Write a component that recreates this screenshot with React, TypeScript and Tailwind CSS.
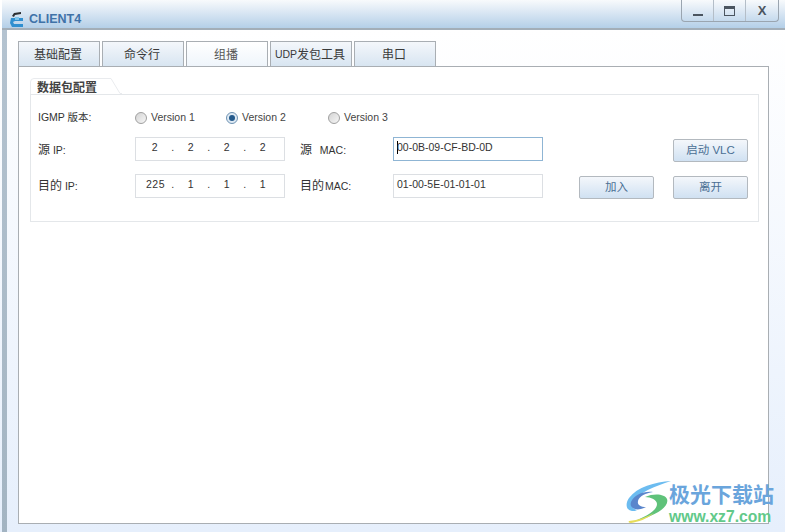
import { useState } from "react";

const font = "font-['Liberation_Sans','Noto_Sans_CJK_SC',sans-serif]";
const tabs = ["基础配置", "命令行", "组播", "UDP发包工具", "串口"];

function Radio({ label, checked, className }: { label: string; checked?: boolean; className: string }) {
  return (
    <div className={`flex items-center gap-[4px] ${className}`}>
      <span className={`w-[12px] h-[12px] rounded-full border flex items-center justify-center ${checked ? "border-[#6f93b3] bg-[#dfeaf4]" : "border-[#a0a0a0] bg-gradient-to-br from-[#d4d4d4] to-[#f6f6f6]"}`}>
        {checked && <span className="w-[6px] h-[6px] rounded-full bg-[#245a8c]" />}
      </span>
      <span className="text-[10.5px] text-[#444]">{label}</span>
    </div>
  );
}

function IpField({ parts }: { parts: string[] }) {
  return (
    <div className="w-[150px] h-[24px] border border-[#dcdfe3] bg-white pl-[10px] grid grid-cols-[repeat(7,18px)] items-center text-[10.5px] text-[#333] tracking-[0.5px] pb-[3px]">
      {parts.map((p, i) => (
        <span key={i} className="contents">
          {i > 0 && <span className="text-center">.</span>}
          <span className="text-center">{p}</span>
        </span>
      ))}
    </div>
  );
}

function Btn({ children, className }: { children: string; className: string }) {
  return (
    <button className={`w-[75px] h-[23px] rounded-[2px] border border-[#b3b9bf] bg-gradient-to-b from-[#f4f7fb] to-[#d0e1f2] text-[11.5px] text-[#4a6f94] ${className}`}>
      {children}
    </button>
  );
}

function Swirl() {
  return (
    <svg width="46" height="42" viewBox="0 0 46 42">
      <path d="M46 0C30 1 12 6 4 17c-4 6-3 12 3 13 2 0 4 0 5-1-4-1-6-4-4-8C13 12 30 5 46 0z" fill="#6cbcf0" />
      <path d="M6 21c3-7 12-11 22-10-7 1-14 4-15 9-1 4 3 6 8 6-5 3-11 3-13 1-2-1-3-3-2-6z" fill="#5a86cc" />
      <path d="M20 16c9-4 20-3 22 2 3 9-15 18-32 22 11-5 22-10 22-17 0-4-6-7-12-7z" fill="#5fc27a" />
      <path d="M4 40c9-1 18-4 25-8-7 6-16 9-23 10-2 0-3-1-2-2z" fill="#e6dc58" />
    </svg>
  );
}

export default function App() {
  const [active] = useState(2);
  return (
    <div className={`relative w-[785px] h-[532px] overflow-hidden bg-white flex flex-col ${font}`}>
      <div className="h-[30px] shrink-0 ml-[2px] border-b-2 border-[#a3aeb8] bg-gradient-to-b from-[#f8fafc] to-[#b4cfe8] flex justify-between">
        <div className="flex items-center pl-[7px] pt-[10px] gap-[3px]">
          <svg width="17" height="17" viewBox="0 0 17 17">
            <path d="M3 5l2-3 7-1 0 2-6 1-1 2z" fill="#2b2f33" />
            <path d="M2 7h12v3H6l-2 1 1 2h9v3H3l-2-4z" fill="#2f8fd0" />
            <path d="M6 6h4v3H6z" fill="#7cc4ec" />
          </svg>
          <span className="text-[12.5px] font-bold text-[#3f72a8]">CLIENT4</span>
        </div>
        <div className="mr-[6px] w-[98px] h-[22px] border border-t-0 border-[#9aa5b0] rounded-b-[4px] grid grid-cols-3 divide-x divide-[#b4bec8] text-[#4b5560]">
          <div className="flex items-end justify-center pb-[5px]"><span className="w-[10px] h-[2px] bg-[#4b5560]" /></div>
          <div className="flex items-center justify-center"><span className="w-[11px] h-[10px] border border-[#4b5560] border-t-[3px]" /></div>
          <div className="flex items-center justify-center text-[13px] font-bold">X</div>
        </div>
      </div>

      <div className="flex-1 flex min-h-0 bg-gradient-to-b from-white to-[#e6effc]">
        <div className="ml-[2px] w-[5px] bg-gradient-to-b from-[#b4c3d0] to-[#a3b4c2]" />
        <div className="flex-1 flex flex-col pl-[11px] pr-[3px] pt-[11px] pb-[8px]">
          <div className="flex gap-[2px] h-[25px] shrink-0 relative z-10">
            {tabs.map((t, i) => (
              <div
                key={t}
                className={`w-[82px] h-[26px] border border-[#a9aeb3] pr-[2px] pt-[1px] flex items-center justify-center text-[12px] text-[#3a3a3a] ${
                  i === active ? "bg-gradient-to-b from-white to-[#eff5fb] text-[#555]" : "bg-gradient-to-b from-[#f4f7fb] to-[#d8e5f1]"
                }`}
              >
                {t.startsWith("UDP") ? (
                  <>
                    <span className="text-[10.5px]">UDP</span>
                    {t.slice(3)}
                  </>
                ) : (
                  t
                )}
              </div>
            ))}
          </div>
          <div className="flex-1 w-[751px] border border-[#a9aeb3] bg-white pl-[11px] pr-[9px] pt-[11px]">
            <div className="relative h-[16px] w-[90px] flex items-end pl-[7px] text-[12px] leading-[14px] font-bold text-[#444]">
              <span className="translate-y-[1px]">数据包配置</span>
              <svg className="absolute left-0 top-0" width="92" height="16" viewBox="0 0 92 16">
                <path d="M0.5 16 L0.5 4 Q0.5 0.5 4 0.5 L81 0.5 L90 15.5 L92 15.5" fill="none" stroke="#e9ebee" />
              </svg>
            </div>
            <div className="h-[128px] border border-[#e4e7ea] pl-[7px] text-[10.5px] text-[#333]">
              <div className="flex items-center h-[42px] pt-[3px]">
                <span className="w-[97px]">IGMP 版本:</span>
                <Radio label="Version 1" className="w-[91px]" />
                <Radio label="Version 2" className="w-[102px]" checked />
                <Radio label="Version 3" className="" />
              </div>
              <div className="flex items-center h-[24px] mb-[13px]">
                <span className="w-[97px] pt-[1px]"><span className="text-[12px]">源</span> IP:</span>
                <IpField parts={["2", "2", "2", "2"]} />
                <span className="w-[93px] ml-[15px] pt-[1px]"><span className="text-[12px]">源</span>&nbsp;&nbsp;<span className="ml-[2px]">MAC:</span></span>
                <div className="w-[150px] h-[24px] border border-[#8fb5d4] pl-[3px] pb-[3px] flex items-center text-[10.5px] text-[#333]">
                  <span className="w-px h-[13px] bg-black -mr-px" />00-0B-09-CF-BD-0D
                </div>
                <Btn className="ml-[130px] mt-[3px]">启动 VLC</Btn>
              </div>
              <div className="flex items-center h-[24px]">
                <span className="w-[97px]"><span className="text-[12px]">目的</span> IP:</span>
                <IpField parts={["225", "1", "1", "1"]} />
                <span className="w-[93px] ml-[15px]"><span className="text-[12px]">目的</span><span className="ml-[1px]">MAC:</span></span>
                <div className="w-[150px] h-[24px] border border-[#dcdfe3] pl-[3px] pb-[3px] flex items-center text-[10.5px] text-[#333]">
                  01-00-5E-01-01-01
                </div>
                <Btn className="ml-[36px] mt-[3px]">加入</Btn>
                <Btn className="ml-[19px] mt-[3px]">离开</Btn>
              </div>
            </div>
          </div>
        </div>
      </div>

      <div className="absolute left-[625px] top-[481px] flex items-start">
        <Swirl />
        <div className="flex flex-col ml-[-2px]">
          <span className="text-[21px] font-bold text-[#6aa5dc] font-['Noto_Sans_CJK_SC',sans-serif] leading-[24px]">极光下载站</span>
          <span className="text-[15.7px] font-bold text-[#62c98a] leading-[18px] mt-[3px] font-['Liberation_Sans',sans-serif]">www.xz7.com</span>
        </div>
      </div>
    </div>
  );
}
